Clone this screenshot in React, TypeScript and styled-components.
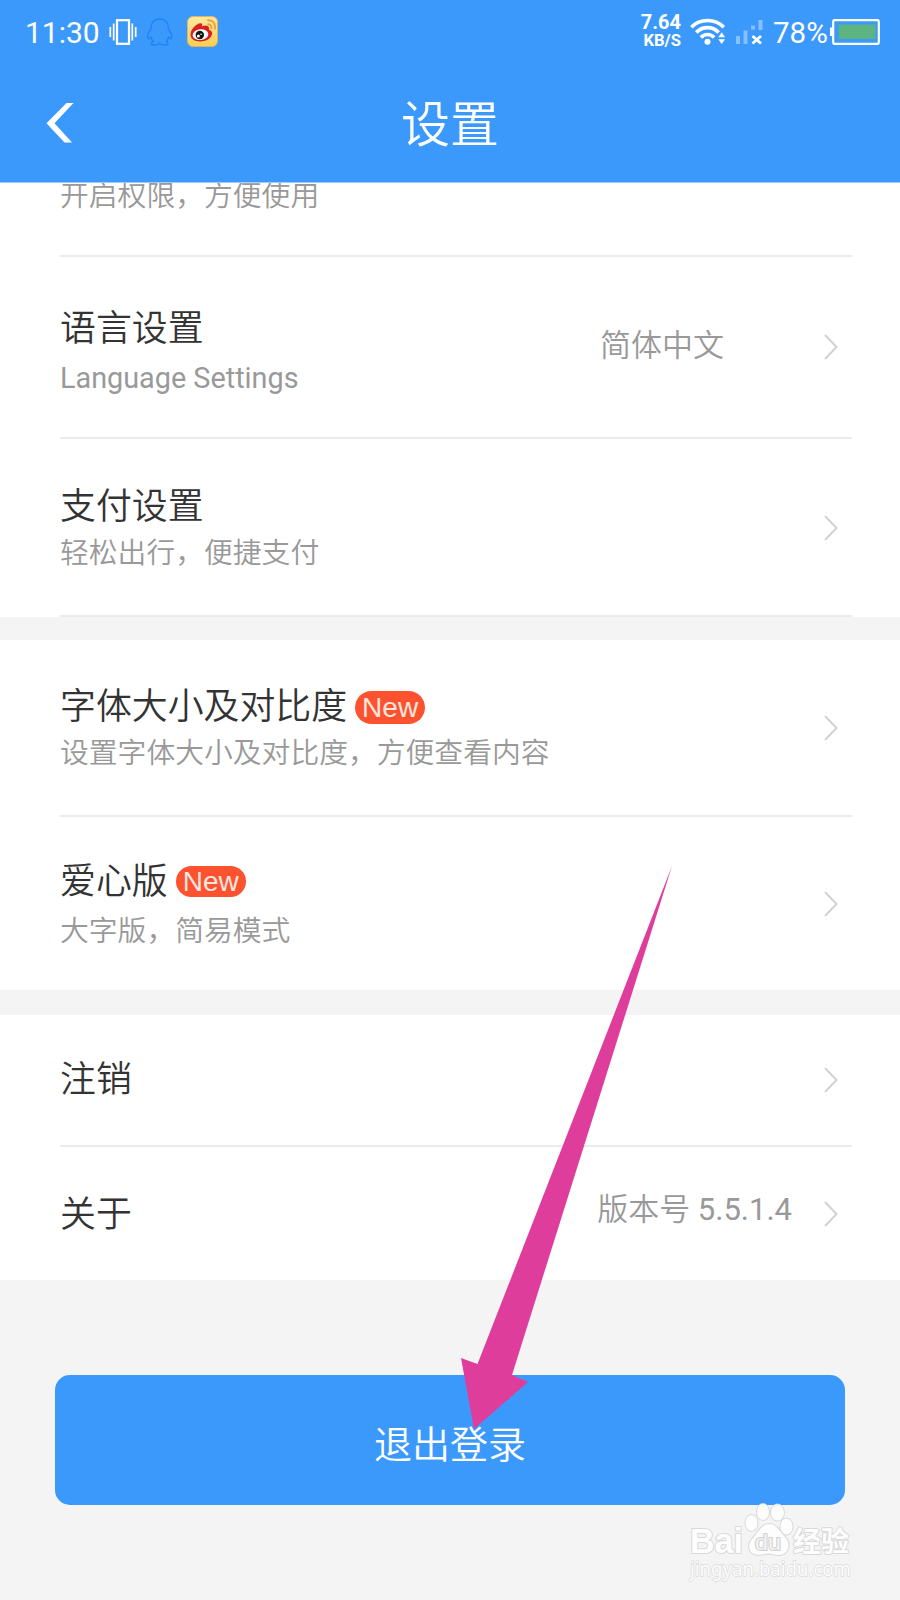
import React from 'react';
import styled, { createGlobalStyle } from 'styled-components';

const GlobalStyle = createGlobalStyle`
  body {
    margin: 0;
    background: #f4f4f4;
    font-family: Roboto, 'Noto Sans CJK SC', sans-serif;
  }
  *, *::before, *::after { box-sizing: border-box; }
`;

const Screen = styled.div`
  position: relative;
  display: flex;
  flex-direction: column;
  width: 900px;
  height: 1600px;
  overflow: hidden;
  background: #f4f4f4;
`;

const Header = styled.header`
  flex: none;
  height: 183px;
  border-bottom: 1px solid #9dccfd;
  background: #3c99fc;
  color: #fff;
`;

const StatusBar = styled.div`
  display: flex;
  align-items: center;
  height: 64px;
  padding: 0 20px 0 25px;
  font-size: 30px;
  line-height: 36px;

  svg { display: block; flex: none; }
`;

const StatusGroup = styled.div`
  display: flex;
  align-items: center;
  height: 100%;
`;

const Spacer = styled.div`
  flex: 1;
`;

const Clock = styled.span`
  width: 84px;
  padding-top: 2px;
`;

const Percent = styled.span`
  margin-left: 9px;
  width: 57px;
  padding-top: 2px;
  font-size: 29.500px;
`;

const Speed = styled.div`
  display: flex;
  flex-direction: column;
  align-items: flex-end;
  margin: -3px 9px 0 0;
  font-weight: 700;
  font-size: 20px;
  line-height: 19px;
`;

const SpeedUnit = styled.span`
  font-size: 16.600px;
  line-height: 17px;
`;

const NavBar = styled.div`
  display: grid;
  grid-template-columns: 120px 1fr 120px;
  align-items: center;
  height: 118px;
`;

const BackButton = styled.button`
  display: flex;
  padding: 0 0 0 46px;
  border: 0;
  background: none;
`;

const PageTitle = styled.h1`
  margin: 0;
  padding-top: 6px;
  font-size: 49px;
  font-weight: 350;
  line-height: 64px;
  text-align: center;
`;

const Section = styled.section`
  flex: none;
  padding: 0 48px 0 60px;
  margin-bottom: ${({ $gap = 0 }: { $gap?: number }) => $gap}px;
  background: #fff;
`;

const Row = styled.div<{ $height: number; $line?: boolean }>`
  display: flex;
  align-items: flex-start;
  height: ${(p) => p.$height}px;
  border-bottom: ${(p) => (p.$line ? '2px solid #ebebeb' : '0')};
  overflow: hidden;
`;

const Texts = styled.div<{ $top: number }>`
  flex: 1;
  margin-top: ${(p) => p.$top}px;
`;

const Title = styled.div`
  display: flex;
  align-items: flex-start;
  color: #333;
  font-size: 35.9px;
  font-weight: 350;
  line-height: 48px;
`;

const Subtitle = styled.div<{ $gap?: number; $latin?: boolean }>`
  margin-top: ${(p) => p.$gap ?? 0}px;
  color: #999;
  font-size: 28.8px;
  font-weight: ${(p) => (p.$latin ? 400 : 350)};
  line-height: 36px;
`;

const Badge = styled.span<{ $height: number }>`
  width: 70px;
  height: ${(p) => p.$height}px;
  margin: 8px 0 0 8px;
  border-radius: 17px;
  background: #fc5230;
  color: #ffe6df;
  font-family: 'Liberation Sans', sans-serif;
  font-size: 28px;
  font-weight: 400;
  line-height: ${(p) => p.$height}px;
  text-align: center;
`;

const Value = styled.span<{ $top: number; $right: number }>`
  margin: ${(p) => p.$top}px ${(p) => p.$right}px 0 0;
  color: #999;
  font-size: 31px;
  font-weight: 350;
  line-height: 40px;
`;

const Digits = styled.span`
  font-weight: 400;
`;

const Arrow = styled.svg<{ $top: number }>`
  flex: none;
  width: 14px;
  height: 26px;
  margin: ${(p) => p.$top}px 14px 0 0;
`;

const Chevron = ({ top }: { top: number }) => (
  <Arrow $top={top} viewBox="0 0 14 26" fill="none" stroke="#d2d2d2" strokeWidth="2">
    <path d="M1 1 12.5 13 1 25" />
  </Arrow>
);

const LogoutButton = styled.button`
  flex: none;
  width: 790px;
  height: 130px;
  margin: 95px 0 0 55px;
  padding: 10px 0 0;
  border: 0;
  border-radius: 15px;
  background: #3c99fc;
  color: #fff;
  font-family: inherit;
  font-size: 38px;
  font-weight: 350;
  line-height: 50px;
`;

const Pointer = styled.svg`
  position: absolute;
  left: 450px;
  top: 860px;
  width: 230px;
  height: 575px;
`;

const Watermark = styled.svg`
  position: absolute;
  left: 680px;
  top: 1495px;
  width: 190px;
  height: 95px;
`;

const VibrateIcon = () => (
  <svg width="28" height="26" viewBox="0 0 28 26" fill="none" stroke="#fff">
    <rect x="8" y="1.2" width="12" height="23.6" strokeWidth="2.2" />
    <path d="M4.7 4.5v17M23.3 4.5v17" strokeWidth="1.7" />
    <path d="M1.3 8v10M26.7 8v10" strokeWidth="1.7" />
  </svg>
);

const PenguinOutline = styled.svg`
  margin-left: 10px;
`;

const PenguinIcon = () => (
  <PenguinOutline width="26" height="28" viewBox="0 0 26 28" fill="none" stroke="#1f84f3" strokeWidth="1.4" strokeLinejoin="round">
    <path d="M4 11C3.700 4.500 7.500 1 12.700 1S21.700 4.500 21.400 11C24 14.500 25.300 18.500 24.400 20.500 23.500 21.500 22.300 20 21.600 18.800 21.300 21 20.400 22.300 19.200 23.400 21.500 24.300 22 27 18.500 27 15.500 27 13.700 26.200 12.700 25.300 11.500 26.300 9.500 27 7 27 3.500 27 4 24.300 6.300 23.400 5 22.300 4.200 21 3.900 18.800 3.100 20 2 21.500 1.100 20.500.200 18.500 1.500 14.500 4 11Z" />
  </PenguinOutline>
);

const WeiboTile = styled.svg`
  margin: -2px 0 0 14px;
`;

const WeiboIcon = () => (
  <WeiboTile width="31" height="31" viewBox="0 0 31 31">
    <defs>
      <linearGradient id="weibo" x1="0" y1="0" x2="0" y2="1">
        <stop offset="0" stopColor="#fbe9a5" />
        <stop offset="1" stopColor="#f8cf55" />
      </linearGradient>
    </defs>
    <rect x=".5" y=".5" width="30" height="30" rx="5.500" fill="url(#weibo)" stroke="#e3b35c" />
    <path d="M3.500 18.500C3.500 13.500 9.500 7.500 13.300 7.300 15.500 7.300 15.500 9.300 15 10.500 18 9 22 8.800 22 12.500 22 13.500 21.800 13.700 23 14.300 26.500 16 25.500 20 22 22.800 18 26 10 26.500 6 23.500 4.300 22.200 3.500 20.600 3.500 18.500Z" fill="#d9211d" />
    <ellipse cx="13.500" cy="18.600" rx="7.900" ry="5.400" fill="#fff" transform="rotate(-7 13.500 18.600)" />
    <circle cx="12.800" cy="19" r="4.200" fill="#151515" />
    <circle cx="11.400" cy="20" r="1.500" fill="#fff" />
    <circle cx="14" cy="18.300" r=".8" fill="#fff" />
    <path d="M20.500 8.300Q24.800 8 24.300 13M20.300 4.300Q29 3.800 28 13.500" fill="none" stroke="#efa23a" strokeWidth="1.900" />
  </WeiboTile>
);

const WifiIcon = () => (
  <svg width="36" height="28" viewBox="0 0 36 28" fill="none" stroke="#fff" strokeWidth="3.600">
    <path d="M1.400 9.300C10 .300 25 .300 33.800 9.300" />
    <path d="M6.300 14.500C12.500 8 22.500 8 28.700 14.500" />
    <path d="M10.900 19.500C14.500 15.500 20.500 15.500 24.100 19.500" />
    <circle cx="17.500" cy="23.700" r="3" fill="#fff" stroke="none" />
    <path d="M28.300 19.200 31.700 14.300 35 19.200ZM28.300 21.200 31.700 26 35 21.200Z" fill="#fff" stroke="none" />
  </svg>
);

const SignalBars = styled.svg`
  margin: -2px 0 0 10px;
`;

const SignalIcon = () => (
  <SignalBars width="28" height="28" viewBox="0 0 28 28">
    <path d="M0 19h4v8H0zM7.500 13.500h4v13.500h-4zM15 8.500h4v4h-4zM22.500 3h4v10h-4z" fill="#fff" fillOpacity=".38" />
    <path d="M16.500 19 25 26.500M25 19 16.500 26.500" stroke="#fff" strokeWidth="2.800" />
  </SignalBars>
);

const BatteryIcon = () => (
  <svg width="50" height="26" viewBox="0 0 50 26">
    <rect x="3.200" y="1.200" width="45.600" height="23.600" rx="1.500" fill="none" stroke="#fff" strokeWidth="2.200" />
    <path d="M0 8.500h3v8.500H0z" fill="#fff" />
    <rect x="8.500" y="5.500" width="37" height="14.500" fill="#5cb483" />
  </svg>
);

export default function App() {
  return (
    <Screen>
      <GlobalStyle />
      <Header>
        <StatusBar>
          <StatusGroup>
            <Clock>11:30</Clock>
            <VibrateIcon />
            <PenguinIcon />
            <WeiboIcon />
          </StatusGroup>
          <Spacer />
          <StatusGroup>
            <Speed>
              <span>7.64</span>
              <SpeedUnit>KB/S</SpeedUnit>
            </Speed>
            <WifiIcon />
            <SignalIcon />
            <Percent>78%</Percent>
            <BatteryIcon />
          </StatusGroup>
        </StatusBar>
        <NavBar>
          <BackButton aria-label="返回">
            <svg width="28" height="40" viewBox="0 0 28 40">
              <path d="M27.500 0H20.500L.5 20.200 18.500 39.500H26L8.500 20.200Z" fill="#fff" />
            </svg>
          </BackButton>
          <PageTitle>设置</PageTitle>
        </NavBar>
      </Header>

      <Section $gap={23}>
        <Row $height={74} $line>
          <Texts $top={-5}>
            <Subtitle>开启权限，方便使用</Subtitle>
          </Texts>
        </Row>
        <Row $height={182} $line>
          <Texts $top={48}>
            <Title>语言设置</Title>
            <Subtitle $gap={7} $latin>Language Settings</Subtitle>
          </Texts>
          <Value $top={69} $right={100}>简体中文</Value>
          <Chevron top={77} />
        </Row>
        <Row $height={178} $line>
          <Texts $top={44}>
            <Title>支付设置</Title>
            <Subtitle $gap={4}>轻松出行，便捷支付</Subtitle>
          </Texts>
          <Chevron top={76} />
        </Row>
      </Section>

      <Section $gap={25}>
        <Row $height={177} $line>
          <Texts $top={43}>
            <Title>
              字体大小及对比度<Badge $height={33}>New</Badge>
            </Title>
            <Subtitle $gap={4}>设置字体大小及对比度，方便查看内容</Subtitle>
          </Texts>
          <Chevron top={75} />
        </Row>
        <Row $height={173}>
          <Texts $top={41}>
            <Title>
              爱心版<Badge $height={31}>New</Badge>
            </Title>
            <Subtitle $gap={7}>大字版，简易模式</Subtitle>
          </Texts>
          <Chevron top={74} />
        </Row>
      </Section>

      <Section>
        <Row $height={132} $line>
          <Texts $top={41}>
            <Title>注销</Title>
          </Texts>
          <Chevron top={52} />
        </Row>
        <Row $height={133}>
          <Texts $top={44}>
            <Title>关于</Title>
          </Texts>
          <Value $top={43} $right={32}>
            版本号 <Digits>5.5.1.4</Digits>
          </Value>
          <Chevron top={54} />
        </Row>
      </Section>

      <LogoutButton>退出登录</LogoutButton>

      <Pointer viewBox="450 860 230 575">
        <path d="M672 866 512 1375 528 1382 474 1429 461 1358 477.500 1364Z" fill="#df3d9b" />
      </Pointer>

      <Watermark viewBox="680 1495 190 95" fill="#fdfdfd" stroke="#d9d9d9" strokeWidth="2" paintOrder="stroke" strokeLinejoin="round">
        <text x="690" y="1553" fontFamily="Liberation Sans, sans-serif" fontWeight="700" fontSize="35" textLength="53" lengthAdjust="spacingAndGlyphs">Bai</text>
        <ellipse cx="751.500" cy="1523" rx="6" ry="8" />
        <ellipse cx="763" cy="1512" rx="6" ry="8" />
        <ellipse cx="777.500" cy="1512.500" rx="6.500" ry="8" />
        <ellipse cx="786.500" cy="1526.500" rx="6" ry="8" />
        <path d="M769 1524C777 1524 780 1532 785 1537 791 1543 789 1554 780 1555 774 1555 772 1553.500 768 1553.500 763 1554 761 1555.500 756 1554.500 748 1553 747 1544 753 1538 758 1533 761 1524 769 1524Z" />
        <text x="755" y="1550" fill="#f4f4f4" stroke="#cfcfcf" fontFamily="Liberation Sans, sans-serif" fontWeight="400" fontSize="22" textLength="26" lengthAdjust="spacingAndGlyphs">du</text>
        <text x="793" y="1552" fontFamily="Noto Sans CJK SC, sans-serif" fontWeight="700" fontSize="28">经验</text>
        <text x="690" y="1576" strokeWidth="1.400" fontFamily="Noto Sans, sans-serif" fontSize="20" textLength="161" lengthAdjust="spacingAndGlyphs">jingyan.baidu.com</text>
      </Watermark>
    </Screen>
  );
}
